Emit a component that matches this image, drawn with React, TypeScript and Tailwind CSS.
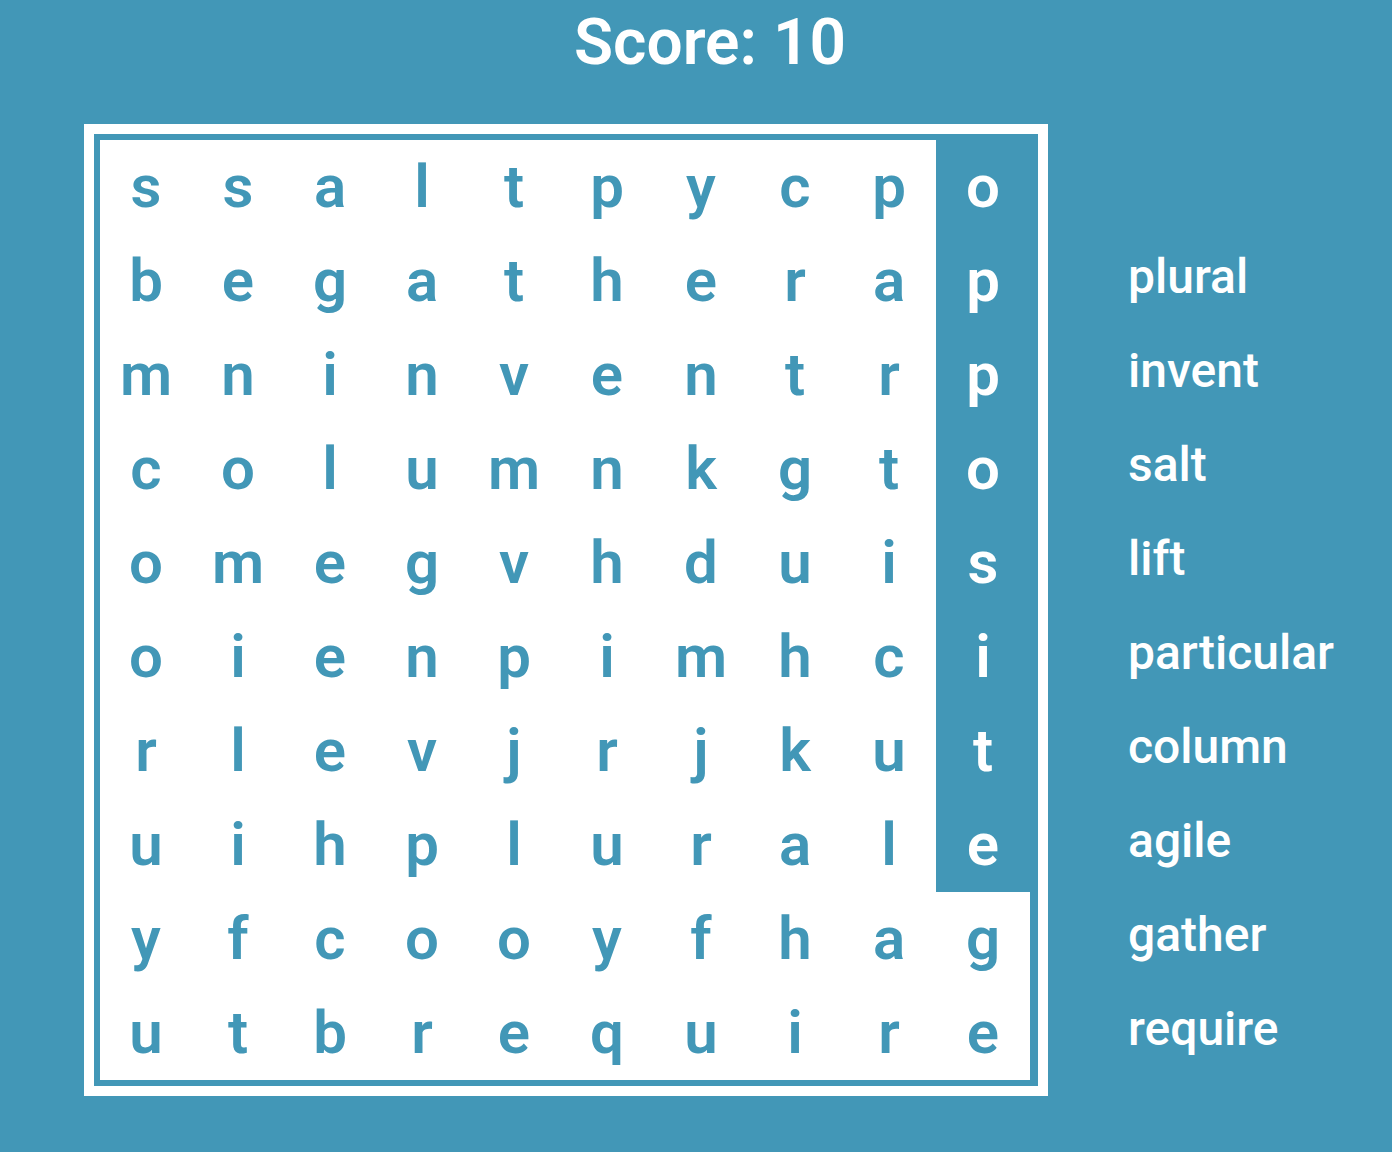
const rows = [
  "ssaltpycpo",
  "begatherap",
  "mninventrp",
  "columnkgto",
  "omegvhduis",
  "oienpimhci",
  "rlevjrjkut",
  "uihplurale",
  "yfcooyfhag",
  "utbrequire",
];

const words = ["plural", "invent", "salt", "lift", "particular", "column", "agile", "gather", "require"];

const isFound = (row: number, column: number) => column === 9 && row < 8;

export default function App() {
  return (
    <main className="min-h-screen bg-[#4297b7] pb-14 font-['Roboto',sans-serif] font-medium text-white">
      <h1 className="pl-7 pt-2 text-center text-[64px] font-semibold leading-[70px]">Score: 10</h1>
      <div className="mt-[46px] flex items-start pl-[84px]">
        <section aria-label="Letter grid" className="shrink-0 border-10 border-white p-[6px] pr-0">
          <table className="table-fixed border-collapse text-[60px] font-semibold leading-[94px] text-[#4297b7]">
            <tbody>
              {rows.map((row, r) => (
                <tr key={row}>
                  {row.split("").map((letter, c) => (
                    <td key={c} className="p-0">
                      <button
                        type="button"
                        aria-pressed={isFound(r, c)}
                        className={`block h-[94px] text-center ${c < 5 ? "w-[92px]" : "w-[94px]"} ${isFound(r, c) ? "bg-[#4297b7] text-white" : "bg-white"}`}
                      >
                        {letter}
                      </button>
                    </td>
                  ))}
                  <td className="w-2 bg-[#4297b7] p-0" />
                </tr>
              ))}
            </tbody>
          </table>
        </section>
        <ul className="ml-20 mt-[106px] text-[48px] leading-[94px]">
          {words.map((word) => (
            <li key={word}>{word}</li>
          ))}
        </ul>
      </div>
    </main>
  );
}
